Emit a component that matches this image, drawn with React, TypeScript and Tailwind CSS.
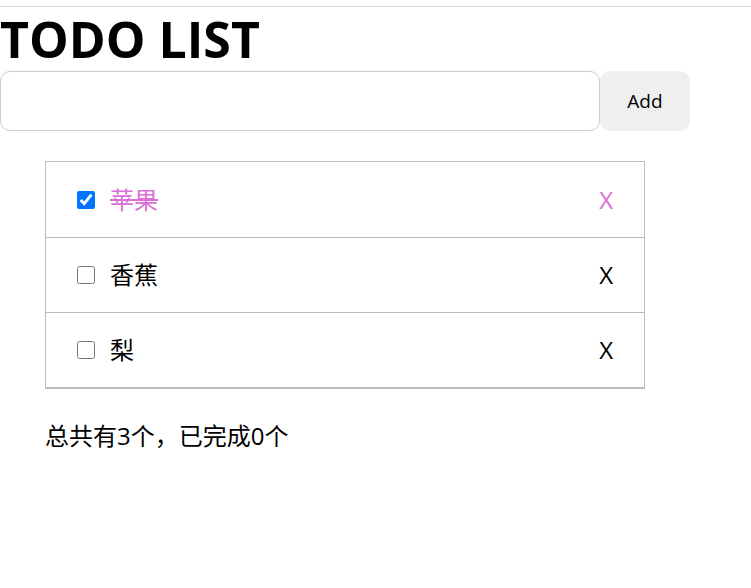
const font = { fontFamily: '"Open Sans", "Noto Sans CJK SC", sans-serif' };

type Todo = { id: number; name: string; done: boolean };

const todos: Todo[] = [
  { id: 1, name: '苹果', done: true },
  { id: 2, name: '香蕉', done: false },
  { id: 3, name: '梨', done: false },
];

export default function App() {
  const doneCount = 0;
  return (
    <div className="min-h-screen bg-white text-black" style={font}>
      <div className="pt-[6px]">
        <div className="border-t border-[#dddddd]" />
      </div>
      <h1 className="text-[50px] font-bold leading-[64px]">TODO LIST</h1>
      <div className="flex">
        <input
          type="text"
          className="w-[600px] h-[60px] rounded-[10px] border border-[#cccccc] px-3 text-[18px] outline-none"
        />
        <button
          type="button"
          className="w-[90px] h-[60px] rounded-[10px] bg-[#efefef] text-[19px]"
        >
          Add
        </button>
      </div>

      <ul className="mt-[30px] ml-[45px] w-[600px] border border-[#bbbbbb] pt-px">
        {todos.map((todo) => (
          <li
            key={todo.id}
            className="flex h-[75px] items-center border-b border-[#bbbbbb] pl-[31px] pr-[31px]"
          >
            <input
              type="checkbox"
              defaultChecked={todo.done}
              className="h-[18px] w-[18px] m-0"
            />
            <span
              className={
                todo.done
                  ? 'ml-[15px] flex-1 text-[24px] text-[#da70d6] line-through'
                  : 'ml-[15px] flex-1 text-[24px]'
              }
            >
              {todo.name}
            </span>
            <span className={todo.done ? 'text-[24px] text-[#da70d6]' : 'text-[24px]'}>X</span>
          </li>
        ))}
      </ul>

      <p className="mt-[32px] ml-[45px] text-[24px] leading-[30px]">
        总共有{todos.length}个，已完成{doneCount}个
      </p>
    </div>
  );
}
